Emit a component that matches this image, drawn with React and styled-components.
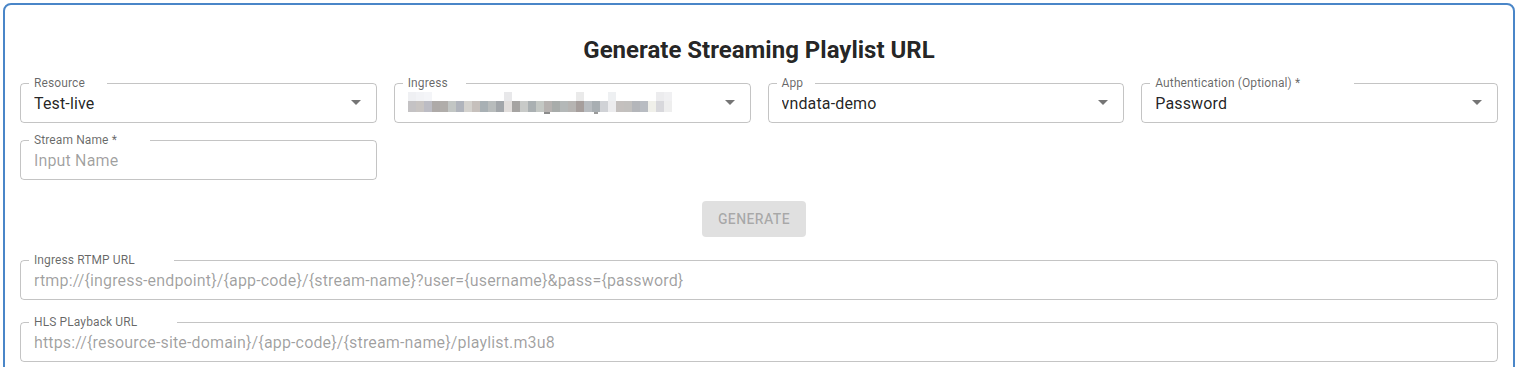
import React from "react";
import styled, { createGlobalStyle } from "styled-components";

const GlobalStyle = createGlobalStyle`
  html, body {
    margin: 0;
    padding: 0;
    background: #fff;
  }
  body {
    padding: 3px 2px 0 3px;
    font-family: Roboto, "Liberation Sans", Arial, sans-serif;
  }
`;

const Card = styled.section`
  border: 2px solid #4a86c8;
  border-radius: 8px;
  padding: 29px 15px 20px;
  background: #fff;
  min-height: 400px;
`;

const Title = styled.h2`
  margin: 0 0 9px;
  text-align: center;
  font: 700 24px/32px Roboto, sans-serif;
  color: rgba(0, 0, 0, 0.87);
`;

const FieldGrid = styled.div`
  display: grid;
  grid-template-columns: repeat(4, minmax(0, 1fr));
  column-gap: 17px;
  row-gap: 9px;
`;

const Field = styled.fieldset`
  margin: 0;
  min-width: 0;
  padding: 1px 8px 7px 13px;
  border: 1px solid rgba(0, 0, 0, 0.23);
  border-radius: 4px;
`;

const Legend = styled.legend`
  margin-left: -5px;
  padding: 0 5px;
  font: 400 12px/16px Roboto, sans-serif;
  letter-spacing: 0.11px;
  color: rgba(0, 0, 0, 0.6);
  white-space: nowrap;
`;

// keeps the notch as wide as the un-shrunk label
const Ghost = styled.span`
  font-size: 4px;
  line-height: 0;
  letter-spacing: 0.04px;
  visibility: hidden;
`;

const Row = styled.div`
  display: flex;
  align-items: center;
  height: 23px;
  gap: 4px;
`;

const Value = styled.div`
  flex: 1;
  min-width: 0;
  font: 400 16px/23px Roboto, sans-serif;
  letter-spacing: 0.15px;
  color: rgba(0, 0, 0, 0.87);
  white-space: nowrap;
  overflow: hidden;
`;

const Input = styled.input`
  flex: 1;
  min-width: 0;
  height: 23px;
  padding: 0;
  border: none;
  outline: none;
  background: transparent;
  font: 400 16px/23px Roboto, sans-serif;
  letter-spacing: 0.15px;
  color: ${(p) => (p.disabled ? "rgba(0, 0, 0, 0.38)" : "rgba(0, 0, 0, 0.87)")};
  -webkit-text-fill-color: ${(p) =>
    p.disabled ? "rgba(0, 0, 0, 0.38)" : "rgba(0, 0, 0, 0.87)"};
  &::placeholder {
    color: rgba(0, 0, 0, 0.38);
    -webkit-text-fill-color: rgba(0, 0, 0, 0.38);
    opacity: 1;
  }
`;

const Arrow = styled.svg`
  width: 24px;
  height: 24px;
  flex-shrink: 0;
  margin-bottom: 3px;
  fill: rgba(0, 0, 0, 0.54);
`;

const ButtonRow = styled.div`
  display: flex;
  justify-content: center;
  margin-top: 21px;
  padding-right: 10px;
`;

const Button = styled.button`
  height: 36px;
  padding: 6px 16px;
  border: none;
  border-radius: 4px;
  background: rgba(0, 0, 0, 0.12);
  color: rgba(0, 0, 0, 0.26);
  font: 500 14px/24px Roboto, sans-serif;
  letter-spacing: 0.4px;
  text-transform: uppercase;
`;

const UrlStack = styled.div`
  display: flex;
  flex-direction: column;
  gap: 14px;
  margin-top: 15px;
`;

const Blur = styled.svg`
  display: block;
  margin-top: -3px;
`;

const bottomTones = [
  "#c4c2c4", "#c8c4c2", "#bcbcc4", "#aeaaa8", "#b0adaa", "#c2c6c4", "#b0b4bc",
  "#d4d2ce", "#c6c0bc", "#a8b0b4", "#b8bcbc", "#a2a6aa", "#e2dedc", "#a6a4a2",
  "#c8cac8", "#aab0b2", "#c4c8c4", "#b6b2b0", "#a8acaa", "#b4b8b8", "#b6b4b2",
  "#a69e9c", "#b8bcc0", "#a8aeb2", "#d0d2d6", "#ececee", "#c4c0be", "#c2c0be",
  "#b4b6ba", "#b8bcc2", "#f0f0ea", "#d8d8dc", "#eeeeee", "#ffffff",
];
const topTones = {
  0: "#eff0f3", 1: "#f2f3f6", 2: "#f4f5f8", 12: "#e8e8ea", 21: "#eaeaea",
  25: "#eef0f2", 31: "#ececee", 32: "#f0f0f2",
};

function Redacted() {
  return (
    <Blur width="280" height="26" viewBox="0 0 280 26">
      {Object.entries(topTones).map(([i, c]) => (
        <rect key={"t" + i} x={i * 8} y="1" width="8" height="11" fill={c} />
      ))}
      {bottomTones.map((c, i) => (
        <rect key={"b" + i} x={i * 8} y="12" width="8" height="11" fill={c} />
      ))}
      <rect x="136" y="23" width="6" height="2" fill="#8c8c8c" />
      <rect x="186" y="23" width="4" height="2" fill="#9a9a9a" />
    </Blur>
  );
}

function Caret() {
  return (
    <Arrow viewBox="0 0 24 24">
      <path d="M7 10l5 5 5-5z" />
    </Arrow>
  );
}

function Label({ text }) {
  return (
    <Legend>
      <span>{text}</span>
      <Ghost aria-hidden="true">{text}</Ghost>
    </Legend>
  );
}

function SelectField({ label, value, children }) {
  return (
    <Field>
      <Label text={label} />
      <Row>
        <Value>{children || value}</Value>
        <Caret />
      </Row>
    </Field>
  );
}

function TextField({ label, value, placeholder, disabled }) {
  return (
    <Field>
      <Label text={label} />
      <Row>
        <Input
          type="text"
          defaultValue={value}
          placeholder={placeholder}
          disabled={disabled}
        />
      </Row>
    </Field>
  );
}

export default function App() {
  return (
    <>
      <GlobalStyle />
      <Card>
        <Title>Generate Streaming Playlist URL</Title>
        <FieldGrid>
          <SelectField label="Resource" value="Test-live" />
          <SelectField label="Ingress">
            <Redacted />
          </SelectField>
          <SelectField label="App" value="vndata-demo" />
          <SelectField label="Authentication (Optional) *" value="Password" />
          <TextField label="Stream Name *" placeholder="Input Name" />
        </FieldGrid>
        <ButtonRow>
          <Button disabled>Generate</Button>
        </ButtonRow>
        <UrlStack>
          <TextField
            label="Ingress RTMP URL"
            value="rtmp://{ingress-endpoint}/{app-code}/{stream-name}?user={username}&pass={password}"
            disabled
          />
          <TextField
            label="HLS PLayback URL"
            value="https://{resource-site-domain}/{app-code}/{stream-name}/playlist.m3u8"
            disabled
          />
        </UrlStack>
      </Card>
    </>
  );
}
